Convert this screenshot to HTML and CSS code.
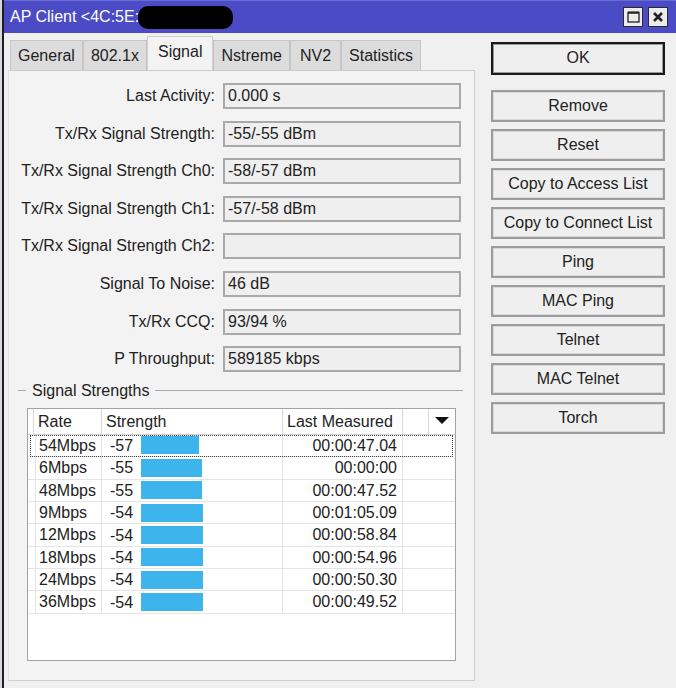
FILE: index.html
```html
<!DOCTYPE html>
<html lang="en">
<head>
    <meta charset="UTF-8">
    <title>AP Client</title>
    <link rel="stylesheet" href="styles.css">
</head>
<body>
    <div class="window">
        <!-- Title bar -->
        <div class="titlebar">
            <span class="title">AP Client &lt;4C:5E:</span>
            <span class="redact"></span>
            <div class="title-btns">
                <div class="tbtn">
                    <svg width="13" height="12" viewBox="0 0 13 12"><rect x="1" y="1.5" width="11" height="9.5" fill="none" stroke="#222" stroke-width="1.3"/><rect x="1" y="0.5" width="11" height="2.2" fill="#222"/></svg>
                </div>
                <div class="tbtn">
                    <svg width="12" height="12" viewBox="0 0 12 12"><path d="M2 2 L10 10 M10 2 L2 10" stroke="#222" stroke-width="2.6"/></svg>
                </div>
            </div>
        </div>

        <div class="content">
            <div class="left">
                <!-- Tabs -->
                <div class="tabs">
                    <div class="tab">General</div>
                    <div class="tab">802.1x</div>
                    <div class="tab active">Signal</div>
                    <div class="tab">Nstreme</div>
                    <div class="tab wide">NV2</div>
                    <div class="tab">Statistics</div>
                </div>

                <div class="panel">
                    <div class="field"><span class="label">Last Activity:</span><span class="value">0.000 s</span></div>
                    <div class="field"><span class="label">Tx/Rx Signal Strength:</span><span class="value">-55/-55 dBm</span></div>
                    <div class="field"><span class="label">Tx/Rx Signal Strength Ch0:</span><span class="value">-58/-57 dBm</span></div>
                    <div class="field"><span class="label">Tx/Rx Signal Strength Ch1:</span><span class="value">-57/-58 dBm</span></div>
                    <div class="field"><span class="label">Tx/Rx Signal Strength Ch2:</span><span class="value"></span></div>
                    <div class="field"><span class="label">Signal To Noise:</span><span class="value">46 dB</span></div>
                    <div class="field"><span class="label">Tx/Rx CCQ:</span><span class="value">93/94 %</span></div>
                    <div class="field"><span class="label">P Throughput:</span><span class="value">589185 kbps</span></div>

                    <div class="group"><span>Signal Strengths</span></div>

                    <!-- Signal strengths table -->
                    <div class="table">
                        <div class="thead">
                            <div class="th"></div>
                            <div class="th">Rate</div>
                            <div class="th">Strength</div>
                            <div class="th">Last Measured</div>
                            <div class="th"></div>
                            <div class="th arrow-cell"><span class="arrow"></span></div>
                        </div>
                        <div class="row focused">
                            <div class="td"></div><div class="td">54Mbps</div>
                            <div class="td strength"><span class="num">-57</span><span class="bar" style="width:58px"></span></div>
                            <div class="td time">00:00:47.04</div><div class="td"></div>
                        </div>
                        <div class="row">
                            <div class="td"></div><div class="td">6Mbps</div>
                            <div class="td strength"><span class="num">-55</span><span class="bar" style="width:61px"></span></div>
                            <div class="td time">00:00:00</div><div class="td"></div>
                        </div>
                        <div class="row">
                            <div class="td"></div><div class="td">48Mbps</div>
                            <div class="td strength"><span class="num">-55</span><span class="bar" style="width:61px"></span></div>
                            <div class="td time">00:00:47.52</div><div class="td"></div>
                        </div>
                        <div class="row">
                            <div class="td"></div><div class="td">9Mbps</div>
                            <div class="td strength"><span class="num">-54</span><span class="bar" style="width:62px"></span></div>
                            <div class="td time">00:01:05.09</div><div class="td"></div>
                        </div>
                        <div class="row">
                            <div class="td"></div><div class="td">12Mbps</div>
                            <div class="td strength"><span class="num">-54</span><span class="bar" style="width:62px"></span></div>
                            <div class="td time">00:00:58.84</div><div class="td"></div>
                        </div>
                        <div class="row">
                            <div class="td"></div><div class="td">18Mbps</div>
                            <div class="td strength"><span class="num">-54</span><span class="bar" style="width:62px"></span></div>
                            <div class="td time">00:00:54.96</div><div class="td"></div>
                        </div>
                        <div class="row">
                            <div class="td"></div><div class="td">24Mbps</div>
                            <div class="td strength"><span class="num">-54</span><span class="bar" style="width:62px"></span></div>
                            <div class="td time">00:00:50.30</div><div class="td"></div>
                        </div>
                        <div class="row">
                            <div class="td"></div><div class="td">36Mbps</div>
                            <div class="td strength"><span class="num">-54</span><span class="bar" style="width:62px"></span></div>
                            <div class="td time">00:00:49.52</div><div class="td"></div>
                        </div>
                    </div>
                </div>
            </div>

            <!-- Action buttons -->
            <div class="actions">
                <div class="btn ok">OK</div>
                <div class="btn">Remove</div>
                <div class="btn">Reset</div>
                <div class="btn">Copy to Access List</div>
                <div class="btn">Copy to Connect List</div>
                <div class="btn">Ping</div>
                <div class="btn">MAC Ping</div>
                <div class="btn">Telnet</div>
                <div class="btn">MAC Telnet</div>
                <div class="btn">Torch</div>
            </div>
        </div>
    </div>
</body>
</html>
```

FILE: styles.css
```css
/* Global */
body {
    margin: 0;
    padding-left: 2px;
    height: 688px;
    overflow: hidden;
    background: #d6dae0;
    font-family: "Liberation Sans", Arial, sans-serif;
    font-size: 16px;
    color: #222;
}

.window {
    height: 688px;
    background: #f0f0f0;
    border-left: 2px solid #1e1e1e;
}

/* Title bar */
.titlebar {
    height: 33px;
    box-sizing: border-box;
    display: flex;
    align-items: center;
    padding: 0 8px 0 6px;
    background: #4b4bc6;
    border-top: 1px solid #6a6ad6;
    color: #fff;
}

.redact {
    width: 95px;
    height: 23px;
    margin-left: -1px;
    background: #000;
    border-radius: 10px;
}

.title-btns {
    margin-left: auto;
    display: flex;
    gap: 5px;
}

.tbtn {
    width: 20px;
    height: 20px;
    box-sizing: border-box;
    background: #ececec;
    border: 1px solid #2a2a2a;
    display: flex;
    align-items: center;
    justify-content: center;
}

/* Main area */
.content {
    display: flex;
    padding-left: 4px;
}

.left {
    width: 467px;
    padding-top: 4px;
}

/* Tabs */
.tabs {
    display: flex;
    align-items: flex-end;
    height: 33px;
    margin-left: 2px;
}

.tab {
    height: 30px;
    box-sizing: border-box;
    padding: 0 7px;
    line-height: 29px;
    background: #dcdcdc;
    border: 1px solid #c6c6c6;
    border-bottom: none;
}

.tab.wide {
    padding: 0 9px;
}

.tab.active {
    height: 34px;
    line-height: 30px;
    padding: 0 10px;
    background: #f3f3f3;
    border-color: #cfcfcf;
}

/* Tab panel */
.panel {
    height: 611px;
    box-sizing: border-box;
    padding-top: 12px;
    background: #f3f3f3;
    border: 1px solid #cdcdcd;
    border-left-color: #e4e4e4;
}

.field {
    display: grid;
    grid-template-columns: 206px 238px;
    column-gap: 8px;
    align-items: center;
    height: 26px;
    margin-bottom: 11.6px;
}

.label {
    text-align: right;
    white-space: nowrap;
}

.value {
    height: 26px;
    box-sizing: border-box;
    padding-left: 3px;
    line-height: 22px;
    background: #efefef;
    border: 2px solid #a9a9a9;
}

/* Group header */
.group {
    display: flex;
    align-items: center;
    height: 14px;
    width: 445px;
    margin-left: 9px;
}

.group::before {
    content: "";
    width: 8px;
    border-top: 1px solid #a8a8a8;
}

.group span {
    margin: 0 6px;
}

.group::after {
    content: "";
    flex: 1;
    border-top: 1px solid #a8a8a8;
}

/* Table */
.table {
    width: 429px;
    height: 253px;
    box-sizing: border-box;
    margin: 10px 0 0 18px;
    background: #fff;
    border: 1px solid #a2a2a2;
}

.thead {
    display: grid;
    grid-template-columns: 6px 68px 181px 120px 26px 1fr;
    height: 25px;
    border-bottom: 1px solid #d4d4d4;
}

.th {
    padding-left: 4px;
    line-height: 25px;
    border-right: 1px solid #d8d8d8;
}

.th:first-child {
    padding: 0;
}

.th.arrow-cell {
    border-right: none;
    display: flex;
    align-items: center;
    justify-content: center;
    padding: 0 0 2px;
}

.arrow {
    width: 0;
    height: 0;
    border-left: 7px solid transparent;
    border-right: 7px solid transparent;
    border-top: 7px solid #111;
}

.row {
    display: grid;
    grid-template-columns: 8px 66px 181px 120px 1fr;
    height: 22.4px;
    box-sizing: border-box;
}

.row.focused {
    outline: 1px dotted #444;
    outline-offset: -1px;
    margin: 0 2px;
    grid-template-columns: 6px 66px 181px 120px 1fr;
}

.td {
    line-height: 21px;
    padding-left: 3px;
    border-right: 1px solid #e4e4e4;
    border-bottom: 1px solid #e4e4e4;
    white-space: nowrap;
}

.td:first-child {
    padding: 0;
}

.td:last-child {
    border-right: none;
}

.strength {
    display: flex;
    align-items: center;
    padding-left: 8px;
}

.num {
    width: 31px;
}

.bar {
    height: 18px;
    background: #3db5ec;
}

.time {
    text-align: right;
    padding-right: 5px;
}

/* Buttons */
.actions {
    width: 174px;
    margin-left: 16px;
    padding-top: 9px;
    display: flex;
    flex-direction: column;
    gap: 7px;
}

.btn {
    height: 32px;
    box-sizing: border-box;
    line-height: 28px;
    text-align: center;
    background: #efefef;
    border: 2px solid #9c9c9c;
    box-shadow: inset 0 0 0 1px #dadada;
    white-space: nowrap;
}

.btn.ok {
    height: 33px;
    margin-bottom: 8px;
    border: 2px solid #1a1a1a;
    box-shadow: inset 0 0 0 1px #9a9a9a;
}
```
